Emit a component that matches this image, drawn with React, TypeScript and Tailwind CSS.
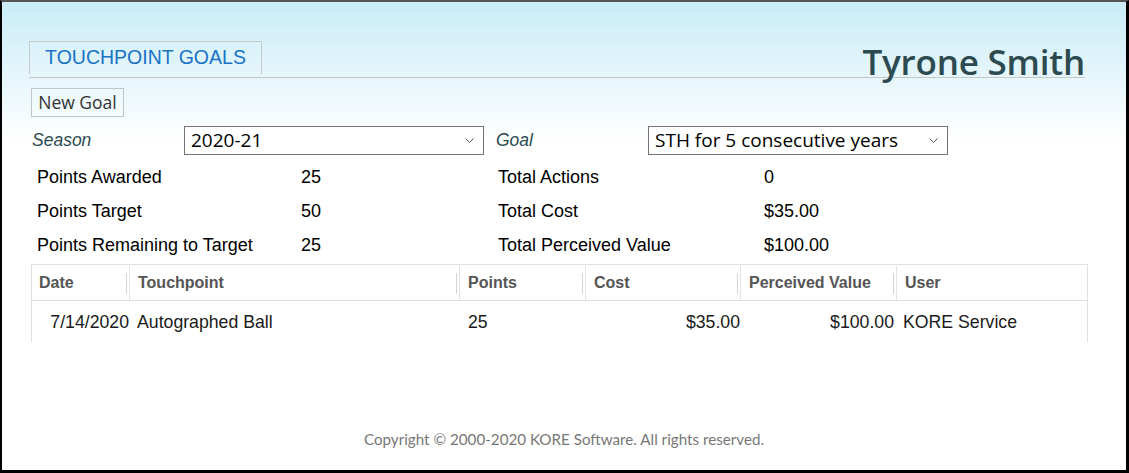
import React from "react";

const arial = { fontFamily: '"Liberation Sans", Arial, sans-serif' };
const open = { fontFamily: '"Open Sans", "Noto Sans", sans-serif' };
const lato = { fontFamily: 'Lato, "Open Sans", sans-serif' };

function Chevron() {
  return (
    <svg width="9" height="5" viewBox="0 0 9 5" className="shrink-0">
      <polyline points="0.5,0.5 4.5,4.5 8.5,0.5" fill="none" stroke="#555" strokeWidth="1" />
    </svg>
  );
}

function Select({ value }: { value: string }) {
  return (
    <div className="flex h-[29px] w-[300px] items-center justify-between border border-[#767676] bg-white pl-[6px] pr-[9px]">
      <span className="text-[19px] leading-none text-black" style={open}>
        {value}
      </span>
      <Chevron />
    </div>
  );
}

function HeadCell({ label, first, last }: { label: string; first?: boolean; last?: boolean }) {
  return (
    <div
      className={
        "flex h-full items-center " +
        (first ? "pl-[7px] " : "border-l border-[#e3e3e3] pl-[8px] ")
      }
    >
      <span className="flex-1 text-[16px] font-bold text-[#555]" style={arial}>
        {label}
      </span>
      {!last && <div className="mr-[2px] h-[21px] w-px bg-[#d4d4d4]" />}
    </div>
  );
}

export default function App() {
  const stats: [string, string, string, string][] = [
    ["Points Awarded", "25", "Total Actions", "0"],
    ["Points Target", "50", "Total Cost", "$35.00"],
    ["Points Remaining to Target", "25", "Total Perceived Value", "$100.00"],
  ];
  return (
    <div
      className="h-[473px] w-full border-b-[3px] border-l-2 border-r-[3px] border-t-2 border-black border-t-[#555] bg-[linear-gradient(to_bottom,#c9ecf7_0px,#ffffff_140px)]"
      style={arial}
    >
      <div className="pl-[27px] pr-[38px] pt-[39px]">
        {/* Header */}
        <div className="mr-[3px] flex items-end justify-between border-b border-[#c6c6c6]">
          <div className="mb-[3px] flex h-[33px] w-[233px] items-center justify-center border-l border-r border-t border-[#c8c8c8]">
            <span className="text-[19.5px] leading-none text-[#1a73c7]" style={arial}>
              TOUCHPOINT GOALS
            </span>
          </div>
          <div
            className="mb-[-2px] text-[35px] font-semibold leading-none tracking-[-0.2px] text-[#2c4a50]"
            style={open}
          >
            Tyrone Smith
          </div>
        </div>

        {/* New Goal */}
        <div className="ml-[2px] mt-[10px] flex h-[29px] w-[93px] items-center justify-center border border-[#c4c4c4]">
          <span className="text-[17.5px] leading-none text-[#333]" style={open}>
            New Goal
          </span>
        </div>

        {/* Selects */}
        <div className="mt-[9px] flex items-center">
          <div className="w-[155px] pl-[3px] text-[17.5px] italic text-[#2c4a50]">Season</div>
          <Select value="2020-21" />
          <div className="w-[164px] pl-[12px] text-[17.5px] italic text-[#2c4a50]">Goal</div>
          <Select value="STH for 5 consecutive years" />
        </div>

        {/* Stats */}
        <div className="mt-[5px] grid grid-cols-[264px_197px_266px_1fr] pl-[8px] text-[18px] text-black">
          {stats.map((r) => (
            <React.Fragment key={r[0]}>
              <div className="flex h-[34px] items-center">{r[0]}</div>
              <div className="flex h-[34px] items-center">{r[1]}</div>
              <div className="flex h-[34px] items-center">{r[2]}</div>
              <div className="flex h-[34px] items-center">{r[3]}</div>
            </React.Fragment>
          ))}
        </div>

        {/* Table */}
        <div className="ml-[2px] mt-[2px] border-l border-r border-[#e0e0e0] bg-white">
          <div className="grid h-[37px] grid-cols-[97px_330px_126px_155px_156px_1fr] border-b border-t border-[#e0e0e0] pt-px">
            <HeadCell label="Date" first />
            <HeadCell label="Touchpoint" />
            <HeadCell label="Points" />
            <HeadCell label="Cost" />
            <HeadCell label="Perceived Value" />
            <HeadCell label="User" last />
          </div>
          <div className="grid h-[41px] grid-cols-[97px_330px_126px_155px_156px_1fr] items-center pt-px text-[17.7px] text-[#1a1a1a]">
            <div className="whitespace-nowrap text-right">7/14/2020</div>
            <div className="pl-[8px]">Autographed Ball</div>
            <div className="pl-[9px]">25</div>
            <div className="text-right">$35.00</div>
            <div className="pr-[2px] text-right">$100.00</div>
            <div className="pl-[7px]">KORE Service</div>
          </div>
        </div>
      </div>

      {/* Footer */}
      <div className="mt-[88px] text-center text-[15.2px] leading-[18px] text-[#777]" style={lato}>
        Copyright © 2000-2020 KORE Software. All rights reserved.
      </div>
    </div>
  );
}
